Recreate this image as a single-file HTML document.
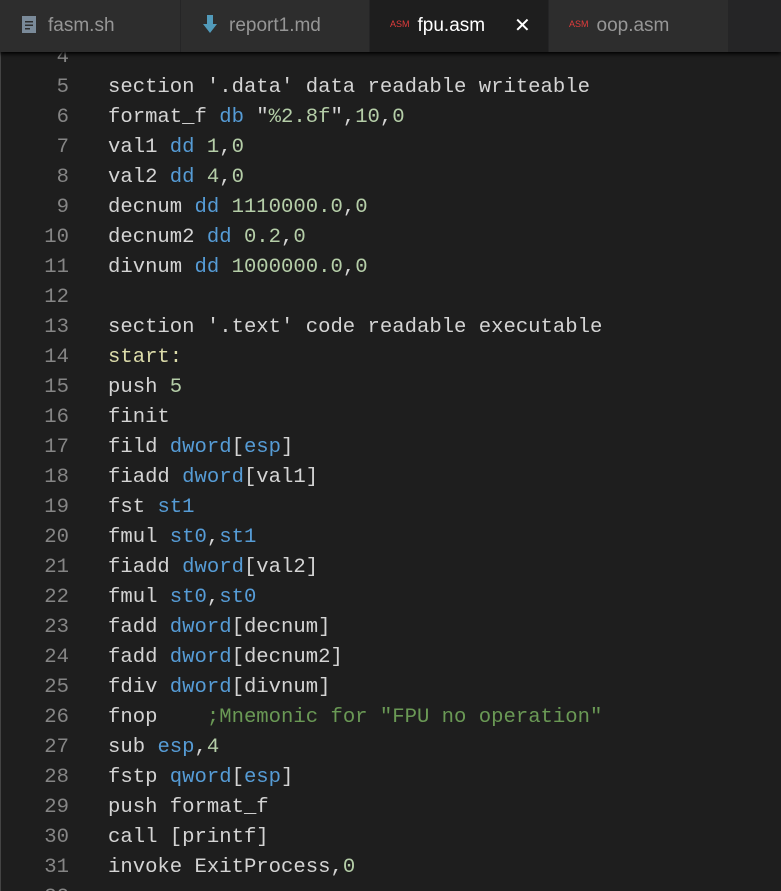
<!DOCTYPE html>
<html><head><style>
html{overflow:hidden;height:891px}
body{margin:0;width:781px;height:891px;background:#1e1e1e;overflow:hidden;position:relative;font-family:"Liberation Mono",monospace}
.tabs{position:absolute;left:0;top:0;width:781px;height:52px;background:#252526;box-shadow:0 2px 4px #000;z-index:2}
.tab{position:absolute;top:0;height:52px;background:#2d2d2d;border-right:1px solid #252526;font-family:"Liberation Sans",sans-serif;font-size:19px;color:#969696;line-height:52px;box-sizing:border-box}
.tab.a{background:#1e1e1e;color:#fff}
.asm{font-size:9px;color:#e03c3c;vertical-align:middle;margin-right:8px;position:relative;top:-2px}
.ed{position:absolute;left:0;top:52px;width:780px;height:839px;border-left:1px solid #444;box-sizing:border-box}
.ln{position:absolute;left:0;width:69px;text-align:right;color:#858585;font-size:20.6px}
.cd{position:absolute;left:108px;color:#d4d4d4;font-size:20.6px;white-space:pre}
.k{color:#569cd6}.n{color:#b5cea8}.c{color:#6a9955}.l{color:#dcdcaa}
</style></head><body>
<div class="ed" id="ed"></div>
<div class="tabs">
<div class="tab" style="left:0;width:181px;padding-left:22px"><svg width="14" height="17" style="vertical-align:-2px;margin-right:12px"><rect x="0" y="0" width="14" height="17" fill="#7a8a99"/><rect x="3" y="5" width="8" height="1.5" fill="#2d2d2d"/><rect x="3" y="8.5" width="8" height="1.5" fill="#2d2d2d"/><rect x="3" y="12" width="5" height="1.5" fill="#2d2d2d"/></svg>fasm.sh</div>
<div class="tab" style="left:181px;width:189px;padding-left:22px"><svg width="14" height="18" style="vertical-align:-2px;margin-right:12px"><path d="M4 0h6v9h4l-7 9-7-9h4z" fill="#519aba"/></svg>report1.md</div>
<div class="tab a" style="left:370px;width:179px;padding-left:20px"><span class="asm">ASM</span>fpu.asm<span style="position:absolute;left:144px;font-size:20px">✕</span></div>
<div class="tab" style="left:549px;width:180px;padding-left:20px"><span class="asm">ASM</span>oop.asm</div>
</div>
<script>
var L=[
[4,''],
[5,"section '.data' data readable writeable"],
[6,'format_f <span class=k>db</span> "<span class=n>%2.8f</span>",<span class=n>10</span>,<span class=n>0</span>'],
[7,'val1 <span class=k>dd</span> <span class=n>1</span>,<span class=n>0</span>'],
[8,'val2 <span class=k>dd</span> <span class=n>4</span>,<span class=n>0</span>'],
[9,'decnum <span class=k>dd</span> <span class=n>1110000.0</span>,<span class=n>0</span>'],
[10,'decnum2 <span class=k>dd</span> <span class=n>0.2</span>,<span class=n>0</span>'],
[11,'divnum <span class=k>dd</span> <span class=n>1000000.0</span>,<span class=n>0</span>'],
[12,''],
[13,"section '.text' code readable executable"],
[14,'<span class=l>start:</span>'],
[15,'push <span class=n>5</span>'],
[16,'finit'],
[17,'fild <span class=k>dword</span>[<span class=k>esp</span>]'],
[18,'fiadd <span class=k>dword</span>[val1]'],
[19,'fst <span class=k>st1</span>'],
[20,'fmul <span class=k>st0</span>,<span class=k>st1</span>'],
[21,'fiadd <span class=k>dword</span>[val2]'],
[22,'fmul <span class=k>st0</span>,<span class=k>st0</span>'],
[23,'fadd <span class=k>dword</span>[decnum]'],
[24,'fadd <span class=k>dword</span>[decnum2]'],
[25,'fdiv <span class=k>dword</span>[divnum]'],
[26,'fnop    <span class=c>;Mnemonic for "FPU no operation"</span>'],
[27,'sub <span class=k>esp</span>,<span class=n>4</span>'],
[28,'fstp <span class=k>qword</span>[<span class=k>esp</span>]'],
[29,'push format_f'],
[30,'call [printf]'],
[31,'invoke ExitProcess,<span class=n>0</span>'],
[32,'']];
var h='';L.forEach(function(r,i){var t=46+i*30;h+='<div class=ln style="top:'+t+'px">'+r[0]+'</div><div class=cd style="top:'+t+'px">'+r[1]+'</div>';});
document.body.insertAdjacentHTML('beforeend',h);
</script>
</body></html>
